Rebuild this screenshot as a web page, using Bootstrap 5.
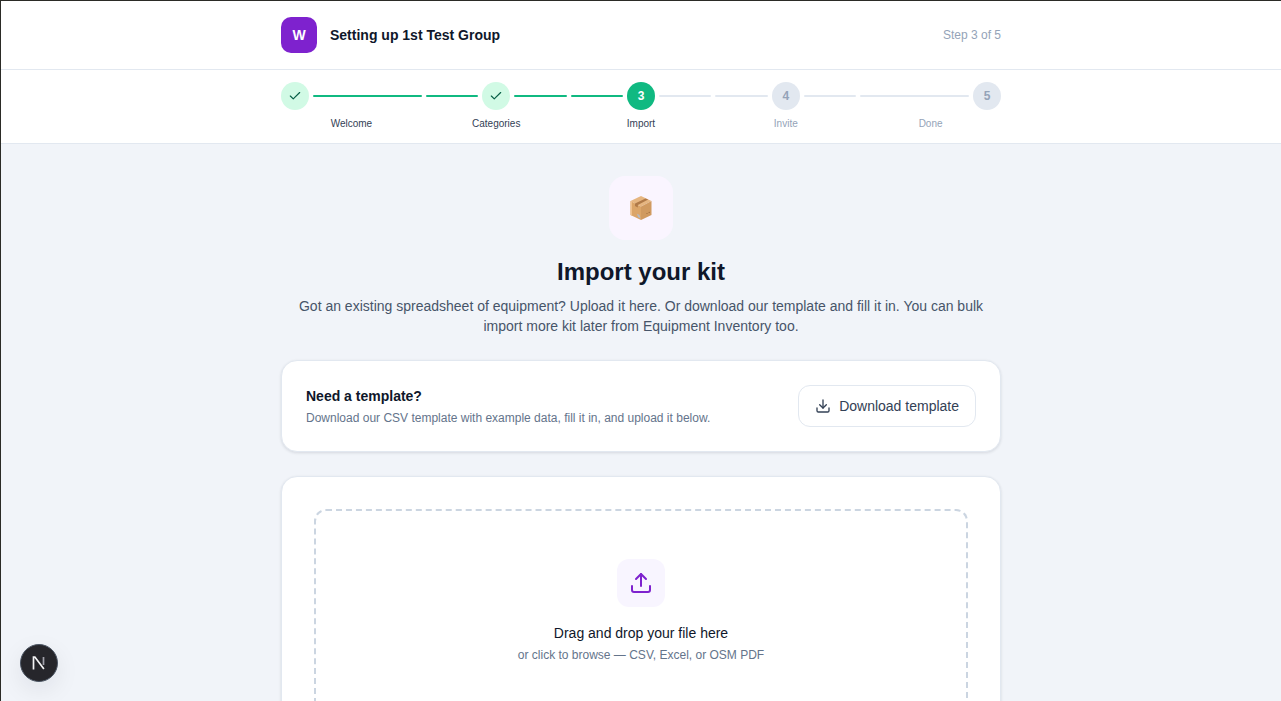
<!DOCTYPE html>
<html lang="en">
<head>
  <meta charset="UTF-8" />
  <meta name="viewport" content="width=device-width, initial-scale=1.0"/>
  <title>Import your kit</title>
  <link href="https://cdn.jsdelivr.net/npm/bootstrap@5.3.2/dist/css/bootstrap.min.css" rel="stylesheet"/>
  <style>
    html, body { height: 100%; overflow: hidden; }
    body {
      background: #f1f4f9;
      font-family: "Liberation Sans", Arial, sans-serif;
      color: #0f172a;
      border-top: 1px solid #2b2b26;
      border-left: 1px solid #2b2b26;
    }
    .wrap-narrow { width: 720px; margin: 0 auto; }
    .top-bar { background: #fff; border-bottom: 1px solid #e2e8f0; height: 69px; }
    .logo-tile {
      width: 36px; height: 36px; border-radius: 10px;
      background: #7e22ce; color: #fff; font-weight: 700; font-size: 14px;
    }
    .group-name { font-size: 14px; font-weight: 700; margin-left: 5px; }
    .step-count { font-size: 12px; color: #94a3b8; }

    .stepper-bar { background: #fff; border-bottom: 1px solid #e2e8f0; height: 74px; padding-top: 12px; }
    .step-col { flex: 145 1 0; min-width: 0; }
    .step-col.step-end { flex-grow: 143; }
    .step-track { height: 28px; gap: 4px; padding: 0 2px; }
    .step-first .step-track { padding-left: 0; }
    .step-last .step-track { padding-right: 0; }
    .step-first .step-name { padding-right: 2px; }
    .step-last .step-name { padding-left: 2px; }
    .step-line { flex: 1; height: 2px; border-radius: 1px; background: #e2e8f0; }
    .step-line.on { background: #10b981; }
    .step-dot {
      width: 28px; height: 28px; border-radius: 50%; flex: none;
      font-size: 12px; font-weight: 700;
      background: #e2e8f0; color: #94a3b8;
    }
    .step-dot.done { background: #d1fae5; color: #065f46; }
    .step-dot.now { background: #10b981; color: #fff; }
    .step-name { font-size: 10px; line-height: 12px; margin-top: 8px; text-align: center; color: #334155; }
    .step-name.todo { color: #94a3b8; }

    .main-area { padding-top: 32px; }
    .hero-tile { width: 64px; height: 64px; border-radius: 16px; background: #faf5ff; }
    .page-title { font-size: 24px; line-height: 32px; font-weight: 700; margin: 16px 0 8px; color: #0f172a; }
    .page-intro { font-size: 14px; line-height: 20px; color: #475569; margin: 0 0 24px; padding: 0 16px; }

    .panel-card {
      border: 1px solid #e2e8f0; border-radius: 16px; background: #fff;
      box-shadow: 0 1px 3px rgba(15, 23, 42, .12);
    }
    .template-card { padding: 24px; margin-bottom: 24px; }
    .template-title { font-size: 14px; line-height: 20px; font-weight: 700; }
    .template-sub { font-size: 12px; line-height: 16px; color: #64748b; margin-top: 4px; }
    .btn-template {
      height: 42px; padding: 0 16px; border-radius: 12px; gap: 8px;
      border: 1px solid #e2e8f0; background: #fff; color: #334155; font-size: 14px;
    }
    .upload-card { padding: 32px; }
    .drop-zone {
      border: 2px dashed #cbd5e1; border-radius: 12px;
      padding: 48px 0 72px; text-align: center;
    }
    .upload-tile { width: 48px; height: 48px; border-radius: 12px; background: #f8f5ff; margin: 0 auto 16px; }
    .drop-title { font-size: 14px; line-height: 20px; color: #0f172a; }
    .drop-sub { font-size: 12px; line-height: 16px; color: #64748b; margin-top: 4px; }

    .next-badge {
      position: fixed; left: 20px; bottom: 19px; width: 38px; height: 38px; border-radius: 50%;
      background: #26262b; border: 1px solid #4b5563;
      box-shadow: 0 8px 24px rgba(15, 23, 42, .08);
    }
  </style>
</head>
<body>

  <!-- Header -->
  <header class="top-bar">
    <div class="wrap-narrow h-100 d-flex align-items-center justify-content-between">
      <div class="d-flex align-items-center gap-2">
        <div class="logo-tile d-flex align-items-center justify-content-center">W</div>
        <span class="group-name">Setting up 1st Test Group</span>
      </div>
      <span class="step-count">Step 3 of 5</span>
    </div>
  </header>

  <!-- Stepper -->
  <div class="stepper-bar">
    <div class="wrap-narrow d-flex">
      <div class="step-col step-end step-first">
        <div class="step-track d-flex align-items-center">
          <div class="step-dot done d-flex align-items-center justify-content-center">
            <svg width="14" height="14" viewBox="0 0 24 24" fill="none" stroke="currentColor" stroke-width="2" stroke-linecap="round" stroke-linejoin="round"><path d="M20 6 9 17l-5-5"/></svg>
          </div>
          <div class="step-line on"></div>
        </div>
        <div class="step-name">Welcome</div>
      </div>
      <div class="step-col">
        <div class="step-track d-flex align-items-center">
          <div class="step-line on"></div>
          <div class="step-dot done d-flex align-items-center justify-content-center">
            <svg width="14" height="14" viewBox="0 0 24 24" fill="none" stroke="currentColor" stroke-width="2" stroke-linecap="round" stroke-linejoin="round"><path d="M20 6 9 17l-5-5"/></svg>
          </div>
          <div class="step-line on"></div>
        </div>
        <div class="step-name">Categories</div>
      </div>
      <div class="step-col">
        <div class="step-track d-flex align-items-center">
          <div class="step-line on"></div>
          <div class="step-dot now d-flex align-items-center justify-content-center">3</div>
          <div class="step-line"></div>
        </div>
        <div class="step-name">Import</div>
      </div>
      <div class="step-col">
        <div class="step-track d-flex align-items-center">
          <div class="step-line"></div>
          <div class="step-dot d-flex align-items-center justify-content-center">4</div>
          <div class="step-line"></div>
        </div>
        <div class="step-name todo">Invite</div>
      </div>
      <div class="step-col step-end step-last">
        <div class="step-track d-flex align-items-center">
          <div class="step-line"></div>
          <div class="step-dot d-flex align-items-center justify-content-center">5</div>
        </div>
        <div class="step-name todo">Done</div>
      </div>
    </div>
  </div>

  <!-- Content -->
  <main class="main-area">
    <div class="wrap-narrow">
      <div class="text-center">
        <div class="hero-tile d-flex align-items-center justify-content-center mx-auto">
          <svg width="24" height="24" viewBox="0 0 24 24">
            <polygon points="12,0 22.5,5 12,10.5 1.5,5" fill="#e6b681"/>
            <polygon points="1.5,5 12,10.5 12,24 1.5,19" fill="#dba568"/>
            <polygon points="22.5,5 12,10.5 12,24 22.5,19" fill="#d09a60"/>
            <polygon points="16.5,2.4 19.2,3.6 8.8,9 8.8,11.5 6,10 6,7.6" fill="#b07a48"/>
            <polygon points="1.5,5 3,5.8 3,19.7 1.5,19" fill="#efc18d"/>
            <polygon points="8,17.8 10.5,19 11.5,22.4 9,21" fill="#b4bac4"/>
            <circle cx="18" cy="17.5" r=".6" fill="#9c6a3c"/>
            <circle cx="20.2" cy="16.4" r=".6" fill="#9c6a3c"/>
          </svg>
        </div>
        <h1 class="page-title">Import your kit</h1>
        <p class="page-intro">Got an existing spreadsheet of equipment? Upload it here. Or download our template and fill it in. You can bulk import more kit later from Equipment Inventory too.</p>
      </div>

      <div class="panel-card template-card d-flex align-items-center justify-content-between">
        <div>
          <div class="template-title">Need a template?</div>
          <div class="template-sub">Download our CSV template with example data, fill it in, and upload it below.</div>
        </div>
        <button type="button" class="btn btn-template d-flex align-items-center">
          <svg width="16" height="16" viewBox="0 0 24 24" fill="none" stroke="currentColor" stroke-width="2" stroke-linecap="round" stroke-linejoin="round"><path d="M21 15v4a2 2 0 0 1-2 2H5a2 2 0 0 1-2-2v-4"/><path d="m7 10 5 5 5-5"/><path d="M12 15V3"/></svg>
          Download template
        </button>
      </div>

      <div class="panel-card upload-card">
        <div class="drop-zone">
          <div class="upload-tile d-flex align-items-center justify-content-center">
            <svg width="24" height="24" viewBox="0 0 24 24" fill="none" stroke="#7e22ce" stroke-width="2" stroke-linecap="round" stroke-linejoin="round"><path d="M21 15v4a2 2 0 0 1-2 2H5a2 2 0 0 1-2-2v-4"/><path d="m17 8-5-5-5 5"/><path d="M12 3v12"/></svg>
          </div>
          <div class="drop-title">Drag and drop your file here</div>
          <div class="drop-sub">or click to browse — CSV, Excel, or OSM PDF</div>
        </div>
      </div>
    </div>
  </main>

  <!-- Dev tools badge -->
  <div class="next-badge d-flex align-items-center justify-content-center">
    <svg width="16" height="16" viewBox="0 0 16 16" fill="none">
      <path d="M2.5 14.5V2h1.4l9 12" stroke="#f4f4f5" stroke-width="1.7"/>
      <path d="M12.5 2v8" stroke="#a1a1aa" stroke-width="1.7"/>
    </svg>
  </div>

  <script src="https://cdn.jsdelivr.net/npm/bootstrap@5.3.2/dist/js/bootstrap.bundle.min.js"></script>
</body>
</html>
